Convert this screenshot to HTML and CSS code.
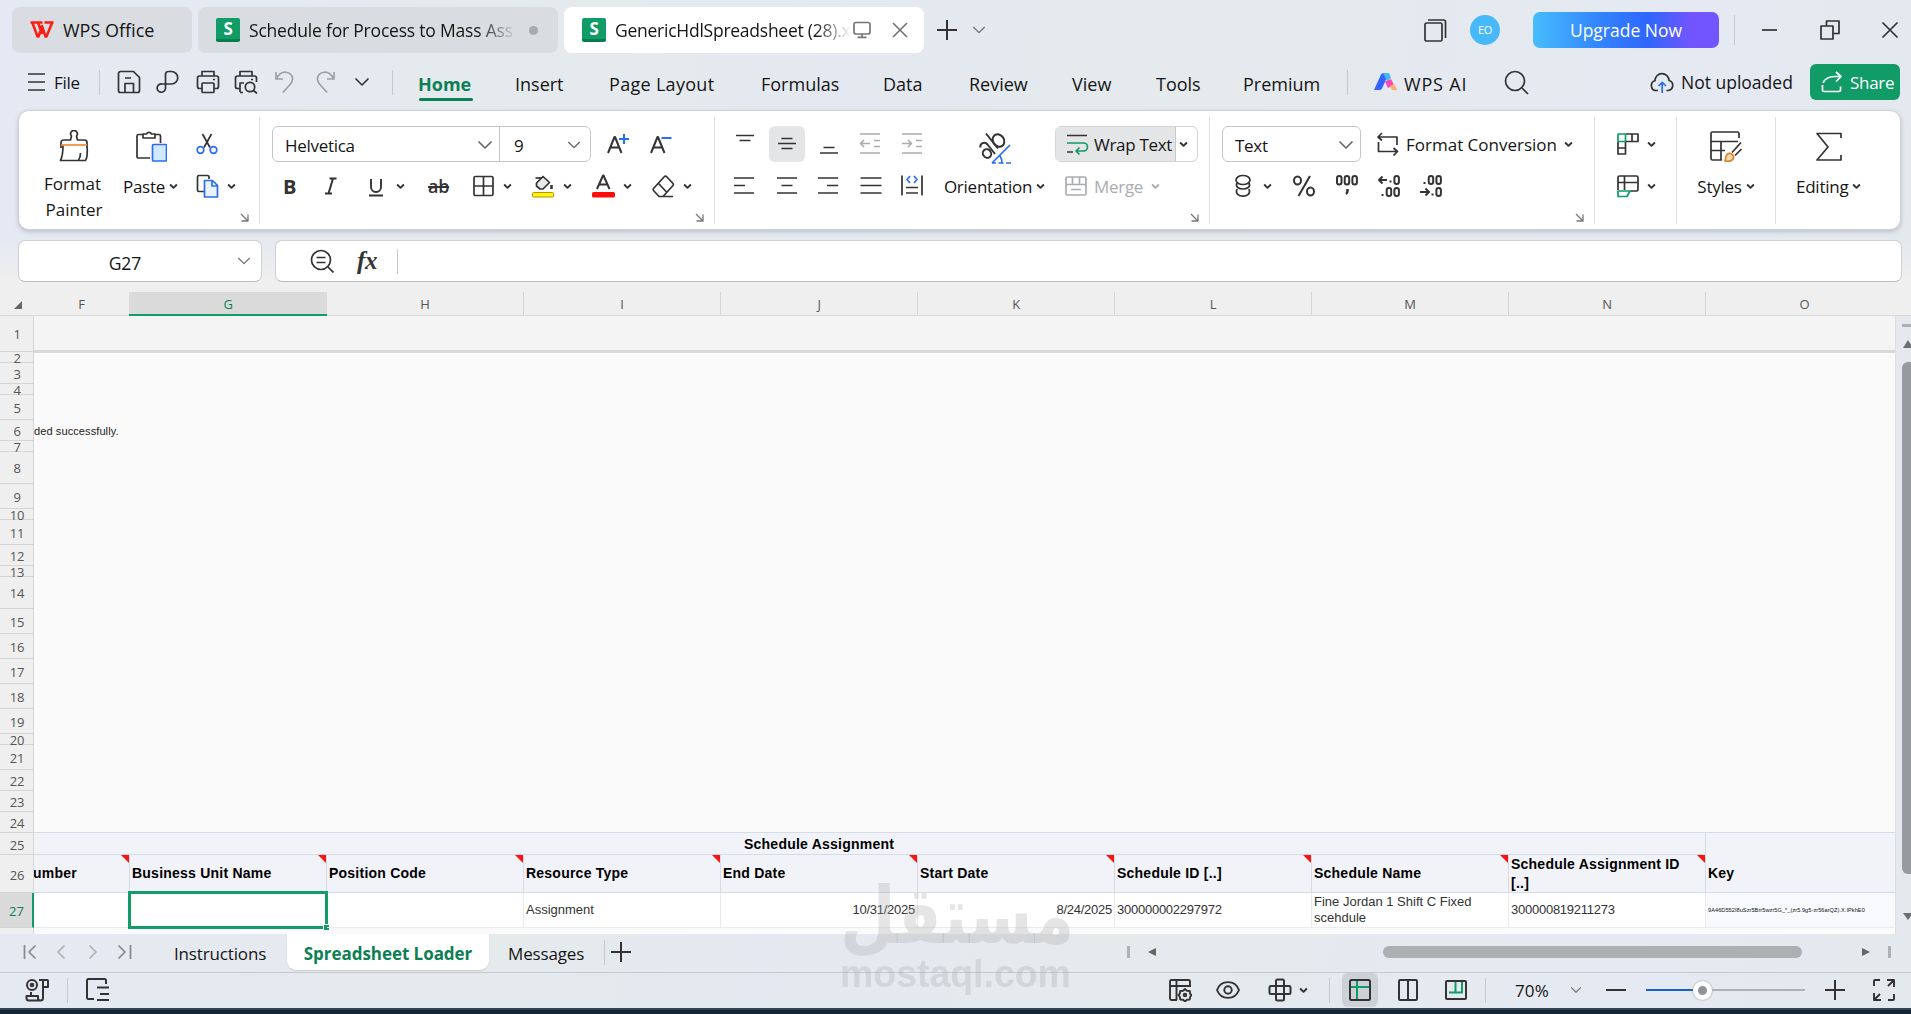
FILE: index.html
```html
<!DOCTYPE html>
<html lang="en">

<head>
    <meta charset="UTF-8">
    <meta name="viewport" content="width=device-width, initial-scale=1.0">
    <title>WPS Spreadsheet</title>
    <link rel="stylesheet" href="styles.css">
</head>

<body>

    <!-- shared icons -->
    <svg class="defs">
        <symbol id="caret" viewBox="0 0 8 8"><path d="M1 2.2l3 3 3-3" stroke-width="1.7"/></symbol>
        <symbol id="chevron" viewBox="0 0 16 16"><path d="M1.5 4.5l6.5 6.5 6.5-6.5" stroke-width="1.6"/></symbol>
        <symbol id="launcher" viewBox="0 0 9 9"><path d="M1 1l6.5 6.500M8 1.500V8H1.500" stroke-width="1.3"/></symbol>
    </svg>

    <header class="titlebar">
        <div class="doc-tab home">
            <svg width="24" height="18" viewBox="0 0 24 18"><path d="M0.500 1.500h12M14.500 1.500h9M2.500 2l5 13.500h1L12 5l3.500 10.500h1L22 2M8 1.500L12 13" stroke="#fb1d12" stroke-width="2.500"/></svg>
            <span>WPS Office</span>
        </div>
        <div class="doc-tab">
            <i class="sheet-icon">S</i>
            <span class="fade long">Schedule for Process to Mass Ass</span>
            <i class="dot"></i>
        </div>
        <div class="doc-tab current">
            <i class="sheet-icon">S</i>
            <span class="fade short">GenericHdlSpreadsheet (28).x</span>
            <svg class="soft" width="18" height="18" viewBox="0 0 18 18"><rect x="1" y="1.500" width="16" height="11.500" rx="2"/><path d="M9 13v3M4.500 16.300h9"/></svg>
            <svg class="soft close-tab" width="16" height="16" viewBox="0 0 16 16"><path d="M1 1l14 14M15 1L1 15"/></svg>
        </div>
        <div class="window-tools">
            <svg width="22" height="22" viewBox="0 0 22 22"><path d="M11 1v20M1 11h20" stroke-width="2"/></svg>
            <svg class="soft" width="14" height="14"><use href="#chevron" stroke-width="2"/></svg>
            <svg width="24" height="24" viewBox="0 0 24 24"><rect x="2" y="5" width="17" height="18" rx="1.500"/><path d="M5 2h15.500a2 2 0 0 1 2 2v16"/></svg>
            <div class="avatar">EO</div>
            <div class="upgrade">Upgrade Now</div>
            <i class="sep tall"></i>
            <svg width="17" height="20" viewBox="0 0 17 20"><path d="M1 10h15"/></svg>
            <svg width="20" height="20" viewBox="0 0 20 20"><rect x="1" y="6" width="12" height="13"/><path d="M6.500 6V1h12.500v12.500h-6"/></svg>
            <svg width="18" height="18" viewBox="0 0 18 18"><path d="M1.500 1.500l15 15M16.500 1.500l-15 15"/></svg>
        </div>
    </header>

    <nav class="menu">
        <svg width="17" height="18" viewBox="0 0 17 18"><path d="M0 1h17M0 9h17M0 17h17"/></svg>
        <span class="file">File</span>
        <i class="sep"></i>
        <svg class="ico" viewBox="0 0 24 24"><path d="M3.500 1.500h13l6 6V20.500a2 2 0 0 1-2 2h-17a2 2 0 0 1-2-2v-17a2 2 0 0 1 2-2zM8 22v-8.500h8.500V22M8 8h6"/></svg>
        <svg class="ico" viewBox="0 0 24 24"><path d="M9.500 18.500V4.500a3 3 0 0 1 3-3h3a6.200 6.200 0 0 1 0 12.500H6.500a4.200 4.200 0 1 0 3 4.500"/></svg>
        <svg class="ico" viewBox="0 0 24 24"><path d="M6 6V1.500h12V6M6 18.500H3.500a2 2 0 0 1-2-2V8a2 2 0 0 1 2-2h17a2 2 0 0 1 2 2v8.500a2 2 0 0 1-2 2H18M17 9.500h2"/><rect x="6" y="13" width="12" height="9.500" rx="1"/></svg>
        <svg class="ico" viewBox="0 0 24 24"><path d="M6 6V1.500h12V6M6 18.500H3.500a2 2 0 0 1-2-2V8a2 2 0 0 1 2-2h17a2 2 0 0 1 2 2v4M6 22V13h4M6 22.500h3M17 9.500h2M19.500 20.500l3.500 3"/><circle cx="16" cy="17" r="4.700"/></svg>
        <svg class="ico pale" viewBox="0 0 24 24"><path d="M3 2v7h7M3.500 8.500C6 4 10 1.500 14 2.500c6 1.500 7 7.500 3.500 11.500L10 22.500"/></svg>
        <svg class="ico pale" viewBox="0 0 24 24"><path d="M21 2v7h-7M20.500 8.500C18 4 14 1.500 10 2.500 4 4 3 10 6.500 14l7.500 8.500"/></svg>
        <svg width="16" height="16"><use href="#chevron"/></svg>
        <i class="sep"></i>
        <span class="menu-tab active">Home</span>
        <span class="menu-tab">Insert</span>
        <span class="menu-tab layout">Page Layout</span>
        <span class="menu-tab">Formulas</span>
        <span class="menu-tab">Data</span>
        <span class="menu-tab">Review</span>
        <span class="menu-tab">View</span>
        <span class="menu-tab">Tools</span>
        <span class="menu-tab">Premium</span>
        <i class="sep"></i>
        <svg width="24" height="18" viewBox="0 0 24 18">
            <g stroke="none"><path d="M0 17L7 1.500Q8 0 9.500 0H15L8 15.500Q7 17 5.500 17z" fill="#3563ff"/><path d="M9 0h6l2 5-4 3z" fill="#41b8f2"/><path d="M11 8.500L17 6l3 6-6 3z" fill="#f14bb8"/><path d="M16 13l4-2 3.500 6H18z" fill="#ffab78"/></g>
        </svg>
        <span class="menu-tab ai">WPS AI</span>
        <svg width="25" height="25" viewBox="0 0 25 25"><circle cx="11" cy="11" r="9.500"/><path d="M18 18l6 6"/></svg>
        <svg class="ico" viewBox="0 0 24 24"><path d="M8 20.500H6.500A5 5 0 0 1 5 10.700 7 7 0 0 1 19 10.500 5.100 5.100 0 0 1 18 20.500h-1.500"/><path d="M12.200 23V12.500M8.500 16l3.700-3.700L16 16" stroke="#2b6df2"/></svg>
        <span class="upload">Not uploaded</span>
        <div class="share">
            <svg width="22" height="22" viewBox="0 0 22 22"><path d="M1.500 14v5a1.500 1.500 0 0 0 1.500 1.500h15a1.500 1.500 0 0 0 1.500-1.500v-3.500M2 12C4 7.500 8 5.500 14 5.500h5.500M15 1l5 4.500-5 5"/></svg>
            <span>Share</span>
        </div>
    </nav>

    <section class="ribbon">
        <div class="group clipboard">
            <div class="big painter">
                <svg width="32" height="32" viewBox="0 0 32 32"><path d="M3 18v-5.500a2.500 2.500 0 0 1 2.500-2.500h7L13.500 6a3.300 3.300 0 1 1 5 0l1 4h7a2.500 2.500 0 0 1 2.500 2.500V18M5 15.500c0 6 0 10-2.500 15h25c2-3 2-9 1.500-15M20.500 30c1.500-2 2-4.500 2-7"/><path d="M3 15h26" stroke="#f08a3c"/></svg>
                <span>Format</span>
                <span>Painter</span>
            </div>
            <div class="big paste">
                <svg width="32" height="32" viewBox="0 0 32 32"><path d="M15 28H3.500A1.500 1.500 0 0 1 2 26.500V6A1.500 1.500 0 0 1 3.500 4.500H8M20 4.500h4A1.500 1.500 0 0 1 25.500 6v7"/><path d="M8 8V4h3.500a2.800 2.800 0 0 1 5 0H20v4z"/><rect x="17.500" y="14.500" width="14" height="16.500" rx="1" fill="#cfeaff" stroke="#2b6df2"/></svg>
                <span>Paste<svg class="caret"><use href="#caret"/></svg></span>
            </div>
            <div class="stack cuts">
                <div class="tools"><svg class="ico" viewBox="0 0 24 24"><path d="M7.500 2l7.500 13.500M16.500 2L9 15.500"/><g stroke="#2b6df2"><circle cx="5.500" cy="18" r="3.300"/><circle cx="18.500" cy="18" r="3.300"/></g></svg></div>
                <div class="tools"><svg class="ico" viewBox="0 0 24 24"><path d="M9 17.500H4A1.500 1.500 0 0 1 2.500 16V3A1.500 1.500 0 0 1 4 1.500h8.500A1.500 1.500 0 0 1 14 3v2"/><path d="M9.500 6.500h8l5 5V23h-13zM17 7v5h5" fill="#eaf4ff" stroke="#2b6df2"/></svg><svg class="caret"><use href="#caret"/></svg></div>
                <svg class="launcher"><use href="#launcher"/></svg>
            </div>
        </div>

        <div class="group fonts">
            <div class="stack">
                <div class="tools top">
                    <div class="combo">
                        <span class="name">Helvetica<svg width="16" height="16"><use href="#chevron"/></svg></span>
                        <span class="size">9<svg width="14" height="14"><use href="#chevron"/></svg></span>
                    </div>
                    <svg class="ico" viewBox="0 0 24 24"><path d="M2 21L8.500 5h.5l6.500 16M4.500 15.500H13" stroke-width="2"/><path d="M18 2v10M13 7h10" stroke="#2b6df2" stroke-width="2"/></svg>
                    <svg class="ico" viewBox="0 0 24 24"><path d="M2 21L8.500 5h.5l6.500 16M4.500 15.500H13" stroke-width="2"/><path d="M12.500 6h10" stroke="#2b6df2" stroke-width="2"/></svg>
                </div>
                <div class="tools bottom">
                    <b class="letter">B</b>
                    <svg class="ico" viewBox="0 0 24 24"><path d="M5.500 4.500h7M1 19.500h7M9 4.500l-4.500 15" stroke-width="2"/></svg>
                    <svg class="ico" viewBox="0 0 24 24"><path d="M4 5v8a5 5 0 0 0 10 0V5M2 21.500h14" stroke-width="1.900"/></svg>
                    <svg class="caret"><use href="#caret"/></svg>
                    <span class="strike">ab</span>
                    <svg class="ico" viewBox="0 0 24 24"><rect x="2" y="2.500" width="19" height="19" rx="1.500"/><path d="M11.500 3v18M2 12h19"/></svg>
                    <svg class="caret"><use href="#caret"/></svg>
                    <svg class="ico" viewBox="0 0 24 24"><path d="M5.500 9L12 2.500l6.500 6L12 15H9L5.500 12z" fill="#e8e9ea"/><path d="M4.500 4H11"/><path d="M20.500 11v4" stroke-width="2.500"/><rect x="1.500" y="18.500" width="21" height="4.500" rx="1" fill="#fff800" stroke="#b99014" stroke-width="1"/></svg>
                    <svg class="caret"><use href="#caret"/></svg>
                    <svg class="ico" viewBox="0 0 24 24"><path d="M6 15l6-13.500h.5L18.500 15M8 10.500h9" stroke-width="2"/><rect x="1" y="18" width="23" height="5.500" rx="1.500" fill="#fb0d0d" stroke="none"/></svg>
                    <svg class="caret"><use href="#caret"/></svg>
                    <svg class="ico wide" viewBox="0 0 26 24"><path d="M8 22.500l-5.500-6a1.500 1.500 0 0 1 0-2L13.500 2.500a1.500 1.500 0 0 1 2 0L22 9.500a1.500 1.500 0 0 1 0 2L12 22.500zM7.500 9.500l8 8.500M8 22.500h14"/></svg>
                    <svg class="caret"><use href="#caret"/></svg>
                </div>
                <svg class="launcher"><use href="#launcher"/></svg>
            </div>
        </div>

        <div class="group align">
            <div class="stack">
                <div class="tools top">
                    <svg class="ico" viewBox="0 0 24 24"><path d="M3 3.500h18M6.500 8.500h11"/></svg>
                    <span class="pressed"><svg class="ico" viewBox="0 0 24 24"><path d="M6.500 6.500h11M3 11.500h18M6.500 16.500h11"/></svg></span>
                    <svg class="ico" viewBox="0 0 24 24"><path d="M6.500 15.500h11M3 21h18"/></svg>
                    <svg class="ico pale" viewBox="0 0 24 24"><path d="M2 2h20M2 21h20M16 8.500h6M16 14.500h6M2.500 11.500H12M6 8l-3.500 3.500L6 15"/></svg>
                    <svg class="ico pale" viewBox="0 0 24 24"><path d="M2 2h20M2 21h20M16 8.500h6M16 14.500h6M2 11.500h9.500M8 8l3.500 3.500L8 15"/></svg>
                </div>
                <div class="tools bottom">
                    <svg class="ico" viewBox="0 0 24 24"><path d="M2 4h20M2 11.500h11M2 19h20"/></svg>
                    <svg class="ico" viewBox="0 0 24 24"><path d="M2 4h20M6.500 11.500h11M2 19h20"/></svg>
                    <svg class="ico" viewBox="0 0 24 24"><path d="M2 4h20M11 11.500h11M2 19h20"/></svg>
                    <svg class="ico" viewBox="0 0 24 24"><path d="M1.500 4h21M1.500 11.500h21M1.500 19h21"/></svg>
                    <svg class="ico" viewBox="0 0 24 24"><path d="M2 1.500v20M22 1.500v20M6 13.500h12M6 19h12"/><path d="M10 2L7 5.500 10 9M14 2l3 3.500L14 9" stroke="#2b6df2"/></svg>
                </div>
            </div>
            <div class="big orient">
                <svg width="36" height="34" viewBox="0 0 36 34"><g stroke-width="2"><path d="M3.500 17.500c-1-4 4-6.500 7-3l7.500 9.500"/><ellipse cx="10" cy="23.500" rx="4" ry="4.500" transform="rotate(-35 10 23.500)"/><path d="M9 3.500l12 15"/><ellipse cx="21.500" cy="10.500" rx="5.500" ry="6.500" transform="rotate(-35 21.500 10.500)"/></g><path d="M33 15L15 33M15 33h4M21.500 33h5M29 33h5M23 26q2 3 2 7" stroke="#2b6df2"/></svg>
                <span>Orientation<svg class="caret"><use href="#caret"/></svg></span>
            </div>
            <div class="stack">
                <div class="tools">
                    <div class="wrap">
                        <span class="on"><svg class="ico" viewBox="0 0 24 24"><path d="M2 3.500h20M2 20h6"/><path d="M2 11h16.500a3.500 3.500 0 0 1 0 8H12M14.500 15.500L11 19l3.500 3.500" stroke="#109b67"/></svg>Wrap Text</span>
                        <svg class="caret"><use href="#caret"/></svg>
                    </div>
                </div>
                <div class="tools merge">
                    <svg class="ico" viewBox="0 0 24 24"><rect x="2" y="3" width="20" height="18" rx="1.500"/><path d="M2 10.500h20M8.500 3v7M15.500 3v7M7 15.500h10"/></svg>
                    <span>Merge</span>
                    <svg class="caret"><use href="#caret"/></svg>
                </div>
                <svg class="launcher"><use href="#launcher"/></svg>
            </div>
        </div>

        <div class="group number">
            <div class="stack">
                <div class="tools top">
                    <div class="combo format"><span>Text<svg width="16" height="16"><use href="#chevron"/></svg></span></div>
                    <svg class="ico" viewBox="0 0 24 24"><path d="M6 1L2 5l4 3.500M2.500 5H21v8M2.500 10v9.500H21M17.500 16l4 3.500-4 4"/></svg>
                    <span class="convert">Format Conversion</span>
                    <svg class="caret"><use href="#caret"/></svg>
                </div>
                <div class="tools bottom">
                    <svg class="ico" viewBox="0 0 24 24"><ellipse cx="12" cy="6" rx="7" ry="4.500"/><path d="M6 9c-4 8 16 8 12 0M6 15c-4 9.500 16 9.500 12 0"/></svg>
                    <svg class="caret"><use href="#caret"/></svg>
                    <svg class="ico" viewBox="0 0 24 24"><g stroke-width="2"><ellipse cx="5.500" cy="6.500" rx="3.500" ry="4"/><ellipse cx="18.500" cy="17.500" rx="3.500" ry="4"/><path d="M18 2L6.500 22"/></g></svg>
                    <svg class="ico" viewBox="0 0 24 24"><g stroke-width="2"><rect x="2" y="2" width="4.500" height="8.500" rx="2.200"/><rect x="9.700" y="2" width="4.500" height="8.500" rx="2.200"/><rect x="17.400" y="2" width="4.500" height="8.500" rx="2.200"/></g><path d="M12.500 15v2q0 2-1.500 3" stroke-width="2.500"/></svg>
                    <svg class="ico" viewBox="0 0 24 24"><g stroke-width="2"><path d="M10 6H2M5.500 2.500L2 6l3.500 3.500M12.500 7.500h2"/><rect x="17.400" y="2" width="4.500" height="8" rx="2.200"/><rect x="9.700" y="14" width="4.500" height="8" rx="2.200"/><rect x="17.400" y="14" width="4.500" height="8" rx="2.200"/><path d="M4.500 21h2"/></g></svg>
                    <svg class="ico" viewBox="0 0 24 24"><g stroke-width="2"><rect x="17.400" y="2" width="4.500" height="8" rx="2.200"/><rect x="9.700" y="2" width="4.500" height="8" rx="2.200"/><path d="M4.500 9h2M1 18h9M6.500 14.500L10 18l-3.500 3.500M12.500 20.500h2"/><rect x="17.400" y="14" width="4.500" height="8" rx="2.200"/></g></svg>
                </div>
                <svg class="launcher"><use href="#launcher"/></svg>
            </div>
        </div>

        <div class="group cells">
            <div class="stack">
                <div class="tools"><svg class="ico" viewBox="0 0 24 24"><path d="M10 2h12v7.500H10M16 2v7.500M2 10v12h7.500V10M2 16h7.500"/><rect x="2" y="2" width="7.500" height="7.500" stroke="#109b67"/></svg><svg class="caret"><use href="#caret"/></svg></div>
                <div class="tools"><svg class="ico" viewBox="0 0 24 24"><path d="M2 16V3.500A1.500 1.500 0 0 1 3.500 2h17A1.500 1.500 0 0 1 22 3.500v12a1.500 1.500 0 0 1-1.500 1.500H14M2 8.500h20M8.500 2v14"/><path d="M2 17h12l-3 5.500H2z" stroke="#109b67"/></svg><svg class="caret"><use href="#caret"/></svg></div>
            </div>
        </div>

        <div class="group styles">
            <div class="big">
                <svg width="34" height="32" viewBox="0 0 34 32"><path d="M30 8V3.500A1.500 1.500 0 0 0 28.500 2h-25A1.500 1.500 0 0 0 2 3.500v25A1.500 1.500 0 0 0 3.500 30H13M2 11.500h27M12 12v18M2 20.500h14M32 12.500L23 22.500M32.500 19L26 25.500"/><path d="M16 31c1-2 0-4 2-6.500 2-2 6-1 6.500 2 .5 4-4 5.500-8.500 4.500z" fill="#ffd9b0" stroke="#d9822b"/></svg>
                <span>Styles<svg class="caret"><use href="#caret"/></svg></span>
            </div>
        </div>

        <div class="group editing">
            <div class="big">
                <svg width="30" height="32" viewBox="0 0 30 32"><path d="M27 8V3.500H3L14 17 3 30h24v-5"/></svg>
                <span>Editing<svg class="caret"><use href="#caret"/></svg></span>
            </div>
        </div>
    </section>

    <section class="formula-row">
        <div class="name-box"><span>G27</span><svg width="14" height="14"><use href="#chevron"/></svg></div>
        <div class="formula-bar">
            <svg width="24" height="24" viewBox="0 0 24 24"><circle cx="11" cy="11" r="9.500"/><path d="M18 18l5.500 5.500M6.500 8.500h9M6.500 13.500h9"/></svg>
            <span class="fx">fx</span>
            <i class="sep"></i>
        </div>
    </section>

    <main class="sheet">
        <div class="grid">
            <div class="letters">
                <span class="corner"><svg width="8" height="8" viewBox="0 0 8 8"><path d="M8 0v8H0z" fill="#666" stroke="none"/></svg></span>
                <span class="f">F</span><span class="sel">G</span><span>H</span><span>I</span><span>J</span><span>K</span><span>L</span><span>M</span><span>N</span><span class="o">O</span>
            </div>
            <div class="row h36"><b>1</b><div class="frozen"></div></div>
            <div class="row h11"><b>2</b></div>
            <div class="row h21"><b>3</b></div>
            <div class="row h11"><b>4</b></div>
            <div class="row h25"><b>5</b></div>
            <div class="row h21"><b>6</b><span class="note">ded successfully.</span></div>
            <div class="row h11"><b>7</b></div>
            <div class="row h32"><b>8</b></div>
            <div class="row h25"><b>9</b></div>
            <div class="row h11"><b>10</b></div>
            <div class="row h25"><b>11</b></div>
            <div class="row h21"><b>12</b></div>
            <div class="row h11"><b>13</b></div>
            <div class="row h32"><b>14</b></div>
            <div class="row h25"><b>15</b></div>
            <div class="row h25"><b>16</b></div>
            <div class="row h25"><b>17</b></div>
            <div class="row h25"><b>18</b></div>
            <div class="row h25"><b>19</b></div>
            <div class="row h11"><b>20</b></div>
            <div class="row h25"><b>21</b></div>
            <div class="row h21"><b>22</b></div>
            <div class="row h21"><b>23</b></div>
            <div class="row h21"><b>24</b></div>
            <div class="row h22 band"><b>25</b><span class="merged">Schedule Assignment</span><span class="key-top"></span></div>
            <div class="row h38 band heads">
                <b>26</b>
                <span class="cell f tip">umber</span>
                <span class="cell tip">Business Unit Name</span>
                <span class="cell tip">Position Code</span>
                <span class="cell tip">Resource Type</span>
                <span class="cell tip">End Date</span>
                <span class="cell tip">Start Date</span>
                <span class="cell tip">Schedule ID [..]</span>
                <span class="cell tip">Schedule Name</span>
                <span class="cell tip">Schedule Assignment ID<br>[..]</span>
                <span class="cell o">Key</span>
            </div>
            <div class="row h35 data">
                <b class="current">27</b>
                <span class="cell f"></span>
                <span class="cell picked"></span>
                <span class="cell"></span>
                <span class="cell">Assignment</span>
                <span class="cell num right">10/31/2025</span>
                <span class="cell num right">8/24/2025</span>
                <span class="cell num">300000002297972</span>
                <span class="cell">Fine Jordan 1 Shift C Fixed scehdule</span>
                <span class="cell num">300000819211273</span>
                <span class="cell o key">9A46D552I8uSzr5Brr5wzr5G_*_(zr5.9g5-zr56arQZ).X.IPkhE0</span>
            </div>
            <div class="row h6"><b></b></div>
        </div>
        <div class="vscroll">
            <i class="split"></i>
            <svg width="10" height="8" viewBox="0 0 10 8"><path d="M5 0l5 8H0z"/></svg>
            <i class="thumb"></i>
            <svg width="10" height="7" viewBox="0 0 10 7"><path d="M5 7L0 0h10z"/></svg>
        </div>
    </main>

    <footer class="sheet-tabs">
        <svg class="dim" width="16" height="16" viewBox="0 0 16 16"><path d="M2.500 1v14M13.500 1.500L7 8l6.500 6.500"/></svg>
        <svg class="dim lighter" width="16" height="16" viewBox="0 0 16 16"><path d="M9.500 1.500L3 8l6.500 6.500"/></svg>
        <svg class="dim lighter" width="16" height="16" viewBox="0 0 16 16"><path d="M2.500 1.500L9 8l-6.500 6.500"/></svg>
        <svg class="dim" width="16" height="16" viewBox="0 0 16 16"><path d="M1.500 1.500L8 8l-6.500 6.500M13.500 1v14"/></svg>
        <span class="tab">Instructions</span>
        <span class="tab open">Spreadsheet Loader</span>
        <span class="tab">Messages</span>
        <i class="sep"></i>
        <svg width="20" height="20" viewBox="0 0 20 20"><path d="M10 0v20M0 10h20" stroke-width="2"/></svg>
        <i class="mark"></i>
        <svg class="arrow" width="8" height="8" viewBox="0 0 8 8"><path d="M0 4l8-4v8z"/></svg>
        <i class="thumb"></i>
        <svg class="arrow" width="8" height="8" viewBox="0 0 8 8"><path d="M8 4L0 0v8z"/></svg>
        <i class="mark"></i>
    </footer>

    <footer class="status">
        <svg class="ico" viewBox="0 0 24 24"><g stroke-width="2"><circle cx="7" cy="7" r="5"/><circle cx="7" cy="7" r="1.300"/><path d="M14 2h8a1 1 0 0 1 1 1v6h-5V2M18 9v11a2.500 2.500 0 0 1-2.500 2.500H4A2.500 2.500 0 0 1 1.500 20v-2H13v2a2.500 2.500 0 0 0 2.500 2.500M6 14v4"/></g></svg>
        <i class="sep"></i>
        <svg class="ico" viewBox="0 0 24 24"><g stroke-width="2"><path d="M20 6V2.500A1.500 1.500 0 0 0 18.500 1h-16A1.500 1.500 0 0 0 1 2.500v17A1.500 1.500 0 0 0 2.500 21H8M11 9.500h12M14 16h9M11 22h12"/></g></svg>
        <svg class="ico" viewBox="0 0 24 24"><g stroke-width="1.900"><path d="M22 9V3.500A1.500 1.500 0 0 0 20.500 2h-17A1.500 1.500 0 0 0 2 3.500v17A1.500 1.500 0 0 0 3.500 22H9M2 8h20M8.500 2v20"/><circle cx="17" cy="17" r="1.300"/><path d="M17 11l2 1.700 2.800.3.300 2.700L23.500 17l-1.400 2-.3 2.500-2.800.3L17 23.500l-2-1.700-2.800-.3-.3-2.500L10.500 17l1.400-1.500.3-2.500 2.800-.3z"/></g></svg>
        <svg class="ico" viewBox="0 0 24 24"><g stroke-width="1.900"><path d="M1 12C5 1.500 19 1.500 23 12 19 22.500 5 22.500 1 12z"/><circle cx="12" cy="12" r="3.700"/></g></svg>
        <svg class="ico" viewBox="0 0 24 24"><g stroke-width="2"><rect x="8" y="1.500" width="8" height="21" rx="1.500"/><rect x="1.500" y="8" width="21" height="8" rx="1.500"/></g></svg>
        <svg class="caret"><use href="#caret"/></svg>
        <i class="sep"></i>
        <span class="view-on"><svg class="ico" viewBox="0 0 24 24"><path d="M9 2v20M2 9h20" stroke="#109b67" stroke-width="2"/><rect x="2" y="2" width="20" height="20" rx="1.500" stroke-width="2"/></svg></span>
        <svg class="ico" viewBox="0 0 24 24"><g stroke-width="2"><rect x="3" y="2" width="18" height="20" rx="1"/><path d="M12 2v20"/></g></svg>
        <svg class="ico" viewBox="0 0 24 24"><path d="M5 14.500h13V4M11.500 4v10" stroke="#109b67" stroke-width="2"/><rect x="2" y="3" width="20" height="18" rx="1" stroke-width="2"/></svg>
        <i class="sep"></i>
        <span class="zoom">70%</span>
        <svg class="soft" width="12" height="12"><use href="#chevron" stroke-width="2"/></svg>
        <svg width="20" height="20" viewBox="0 0 20 20"><path d="M0 10h20" stroke-width="2"/></svg>
        <div class="slider"><i class="fill"></i><i class="knob"></i><i class="rest"></i></div>
        <svg width="20" height="20" viewBox="0 0 20 20"><path d="M10 0v20M0 10h20" stroke-width="2"/></svg>
        <svg class="ico" viewBox="0 0 24 24"><g stroke-width="1.900"><path d="M2 8V3a1 1 0 0 1 1-1h5M15 2h7v7M22 2l-6 6M22 16v5a1 1 0 0 1-1 1h-5M9 22H2v-7M2 22l6-6"/></g></svg>
    </footer>

    <div class="taskbar"></div>

    <div class="watermark">
        <span class="ar">مستقل</span>
        <span class="en">mostaql.com</span>
    </div>

</body>

</html>
```
FILE: styles.css
```css
* {
    box-sizing: border-box;
}

body {
    margin: 0;
    width: 1911px;
    height: 1014px;
    overflow: hidden;
    position: relative;
    font-family: "Open Sans", "Noto Sans", sans-serif;
    font-size: 17px;
    letter-spacing: -0.3px;
    color: #151515;
    white-space: nowrap;
    background: linear-gradient(95deg, #e5e9f3, #e5eaed 30%, #e4e9f1 42%, #e5eaed 60%, #e5e9f2 85%, #e4e9ed);
}

svg {
    display: block;
    flex: none;
    fill: none;
    stroke: #333;
    stroke-width: 1.7;
    stroke-linejoin: round;
}

.defs {
    position: absolute;
    width: 0;
    height: 0;
}

.ico {
    width: 24px;
    height: 24px;
}

.ico.wide {
    width: 26px;
}

.caret {
    width: 9px;
    height: 9px;
}

.soft {
    stroke: #777;
}

.pale {
    stroke: #a9adb1;
}

.sep {
    width: 1px;
    height: 25px;
    background: #c6cacf;
}

/* title bar */
.titlebar {
    display: flex;
    gap: 6px;
    height: 60px;
    padding: 7px 0 7px 12px;
}

.doc-tab {
    display: flex;
    flex: none;
    align-items: center;
    width: 360px;
    height: 46px;
    padding-left: 18px;
    border-radius: 8px;
    background: #d9dde1;
    font-size: 17.5px;
    letter-spacing: -0.2px;
}

.doc-tab.home {
    width: 180px;
    font-size: 18px;
    letter-spacing: 0;
}

.doc-tab.home span {
    margin-left: 9px;
}

.doc-tab.current {
    background: #fff;
}

.sheet-icon {
    width: 24px;
    height: 24px;
    border-radius: 2px;
    border-bottom: 3px solid #077c4f;
    background: #109b67;
    color: #fff;
    font: bold 17px/22px "Open Sans", sans-serif;
    text-align: center;
}

.fade {
    overflow: hidden;
    margin-left: 9px;
    -webkit-mask-image: linear-gradient(90deg, #000 85%, transparent);
    mask-image: linear-gradient(90deg, #000 85%, transparent);
}

.fade.long {
    width: 268px;
}

.fade.short {
    width: 236px;
    margin-right: 2px;
    letter-spacing: -0.25px;
}

.dot {
    width: 9px;
    height: 9px;
    margin-left: 12px;
    border-radius: 50%;
    background: #a7abae;
}

.close-tab {
    margin-left: 21px;
}

.window-tools {
    display: grid;
    flex: none;
    grid-template-columns: 36px 451px 47px 63px 201px 27px 59px 61px 24px;
    align-items: center;
    height: 46px;
    margin-left: 6px;
}

.avatar {
    width: 30px;
    height: 30px;
    border-radius: 50%;
    background: #47b8fa;
    color: #fff;
    font-size: 11px;
    line-height: 29px;
    text-align: center;
}

.upgrade {
    width: 186px;
    height: 36px;
    border-radius: 7px;
    background: linear-gradient(90deg, #46bdfb, #3385ff 35%, #2e66ff 62%, #7355ff 85%);
    color: #fff;
    font-size: 17.5px;
    letter-spacing: 0;
    line-height: 36px;
    text-align: center;
}

.sep.tall {
    height: 30px;
}

/* menu */
.menu {
    display: grid;
    grid-template-columns: 26px 45px 18px 39px 40px 38px 39px 40px 41px 38px 26px 97px 94px 152px 122px 86px 103px 84px 87px 104px 27px 30px 100px 146px 31px 127px 92px;
    align-items: center;
    height: 44px;
    padding-left: 28px;
}

.menu .pale {
    stroke: #9da1a5;
}

.menu-tab {
    position: relative;
    padding-top: 3px;
    font-size: 18px;
    letter-spacing: 0;
}

.menu-tab.layout {
    letter-spacing: 0.3px;
}

.menu-tab.ai {
    letter-spacing: 0.8px;
}

.upload {
    font-size: 17.5px;
    letter-spacing: 0;
}

.menu-tab.active {
    width: 55px;
    font-weight: bold;
    letter-spacing: 0;
    color: #0c7f54;
}

.menu-tab.active::after {
    content: "";
    position: absolute;
    left: 1px;
    right: 0;
    bottom: -5px;
    height: 3px;
    border-radius: 2px;
    background: #0c7f54;
}

.share {
    display: flex;
    align-items: center;
    gap: 7px;
    height: 36px;
    padding-left: 11px;
    margin-left: 2px;
    border-radius: 6px;
    background: #109b67;
    color: #fff;
}

.share svg {
    stroke: #fff;
}

/* ribbon */
.ribbon {
    display: flex;
    width: 1883px;
    height: 120px;
    margin: 6px 0 0 18px;
    padding: 6px 0 5px 1px;
    border: 1px solid #cdd2d6;
    border-radius: 11px;
    background: #fff;
    box-shadow: 0 2px 4px rgba(90, 100, 110, 0.3);
}

.group {
    display: flex;
    padding-top: 9px;
    border-right: 1px solid #dcdee0;
}

.group.editing {
    border: none;
    padding-left: 20px;
}

.stack {
    display: flex;
    flex-direction: column;
    gap: 6px;
    flex: 1;
}

.tools {
    display: flex;
    align-items: center;
    height: 36px;
}

.tools.top,
.tools.bottom {
    display: grid;
}

.launcher {
    width: 9px;
    height: 9px;
    margin: 3px 10px 0 0;
    align-self: flex-end;
    stroke: #777;
}

.big {
    display: flex;
    flex-direction: column;
    align-items: center;
}

.big > svg {
    margin: 4px 0 6px;
}

.big span {
    display: flex;
    align-items: center;
    gap: 4px;
    height: 36px;
    letter-spacing: -0.25px;
}

.clipboard {
    width: 240px;
    padding-left: 24px;
}

.painter {
    width: 60px;
}

.painter span {
    height: 25px;
    padding-top: 8px;
    letter-spacing: 0;
}

.painter svg + span {
    margin-left: -3px;
    padding-top: 6px;
}

.paste {
    width: 53px;
    margin: 0 17px 0 20px;
}

.cuts .tools {
    padding-left: 1px;
    gap: 8px;
}

.fonts {
    width: 455px;
}

.fonts .top {
    grid-template-columns: 334px 43px 24px;
    padding-left: 12px;
}

.fonts .bottom {
    grid-template-columns: 41px 43px 29px 31px 45px 31px 28px 32px 28px 32px 28px 32px 10px;
    padding-left: 23px;
}

.combo {
    display: flex;
    width: 319px;
    height: 36px;
    border: 1px solid #c3c5c8;
    border-radius: 6px;
}

.combo span {
    display: flex;
    flex: 1;
    align-items: center;
    justify-content: space-between;
    padding: 2px 6px 0 12px;
}

.combo svg {
    stroke: #666;
}

.combo .size {
    flex: none;
    width: 91px;
    padding-right: 9px;
    padding-left: 14px;
    border-left: 1px solid #c3c5c8;
}

.combo.format {
    width: 139px;
}

.letter {
    font-size: 20px;
    color: #333;
}

.strike {
    margin-left: 1px;
    font-size: 18px;
    font-weight: 600;
    color: #333;
    text-decoration: line-through 1.5px;
    text-decoration-skip-ink: none;
}

.align {
    width: 495px;
}

.align .stack:first-child {
    flex: none;
    width: 214px;
}

.align .top {
    grid-template-columns: 36px 48px 41px 42px 24px;
    padding-left: 18px;
}

.align .bottom {
    grid-template-columns: 43px 41px 43px 41px 24px;
    padding-left: 17px;
}

.pressed {
    display: flex;
    align-items: center;
    justify-content: center;
    width: 36px;
    height: 36px;
    border-radius: 6px;
    background: #e4e5e6;
}

.orient {
    width: 103px;
    margin: 0 9px 0 14px;
}

.orient > svg {
    margin-bottom: 4px;
}

.wrap {
    display: flex;
    align-items: center;
    width: 143px;
    height: 36px;
    border: 1px solid #d3d5d7;
    border-radius: 6px;
    overflow: hidden;
}

.wrap .on {
    display: flex;
    align-items: center;
    gap: 5px;
    width: 120px;
    height: 36px;
    padding-left: 9px;
    margin-right: 3px;
    border-right: 1px solid #c7c9cb;
    background: #e4e5e6;
}

.merge {
    gap: 6px;
    padding-left: 9px;
    color: #a9adb1;
}

.merge .caret {
    margin-left: 2px;
}

.merge svg {
    stroke: #a9adb1;
}

.number {
    width: 385px;
}

.number .top {
    grid-template-columns: 154px 30px 158px 10px;
    padding-left: 12px;
}

.convert {
    letter-spacing: 0;
}

.number .bottom {
    grid-template-columns: 32px 29px 43px 42px 42px 24px;
    padding-left: 21px;
}

.cells {
    width: 82px;
    padding-left: 21px;
}

.cells .tools {
    gap: 7px;
}

.styles {
    width: 99px;
    justify-content: center;
}

/* formula row */
.formula-row {
    display: flex;
    gap: 13px;
    height: 62px;
    padding: 10px 0 10px 18px;
    background: linear-gradient(rgba(239, 239, 239, 0) 10px, #efefef 52px);
}

.name-box,
.formula-bar {
    display: flex;
    align-items: center;
    width: 244px;
    height: 42px;
    border: 1px solid #cdd1d5;
    border-bottom-color: #b9bcbe;
    border-radius: 7px;
    background: #fff;
}

.name-box span {
    width: 218px;
    padding: 3px 6px 0 0;
    text-align: center;
    font-size: 17.5px;
    letter-spacing: 0;
}

.name-box svg {
    stroke: #777;
}

.formula-bar {
    display: grid;
    grid-template-columns: 47px 40px 1px;
    width: 1627px;
    padding-left: 34px;
}

.fx {
    font: italic bold 25px "Liberation Serif", serif;
    color: #333;
}

/* sheet */
.sheet {
    display: flex;
    height: 642px;
}

.grid {
    width: 1895px;
    background: #fafafa;
}

.letters {
    display: flex;
    width: 1911px;
    height: 24px;
    background: #efefef;
    color: #555;
    font-size: 13px;
    line-height: 25px;
    text-align: center;
    border-bottom: 1px solid #d9d9d9;
}

.letters span {
    width: 197px;
    border-right: 1px solid #d5d5d5;
}

.letters .corner {
    width: 34px;
    padding: 9px 0 0 14px;
    border: none;
}

.letters .f {
    width: 95px;
    border: none;
}

.letters .sel {
    width: 198px;
    height: 24px;
    background: #dadada;
    color: #0c7f54;
    border: none;
    border-bottom: 2px solid #149c68;
}

.letters .o {
    border: none;
}

.row {
    display: flex;
    line-height: 1;
}

.row b {
    display: flex;
    align-items: center;
    justify-content: center;
    width: 34px;
    height: 100%;
    padding: 2px 0 0 1px;
    border-right: 1px solid #d5d5d5;
    border-bottom: 1px solid #d5d5d5;
    background: #efefef;
    color: #555;
    font-size: 13px;
    font-weight: normal;
}

.h6 { height: 6px; }
.h6 b { border-bottom: none; }
.h11 { height: 11px; }
.h21 { height: 21px; }
.h22 { height: 22px; }
.h25 { height: 25px; }
.h32 { height: 32px; }
.h35 { height: 35px; }
.h36 { height: 36px; }
.h38 { height: 38px; }

.row.h11 b,
.row.h21 b,
.row.h25 b {
    padding-top: 3px;
}

.frozen {
    width: 1861px;
    height: 37px;
    background: #f4f4f4;
    border-bottom: 3px solid #d9d9d9;
}

.note {
    overflow: hidden;
    padding-top: 5px;
    font: 11px/13px "Liberation Sans", sans-serif;
    letter-spacing: 0.1px;
    color: #222;
}

.band {
    background: #f2f3f8;
    font: bold 14px "Liberation Sans", sans-serif;
    letter-spacing: 0.23px;
    color: #000;
}

.band b {
    font-family: "Open Sans", sans-serif;
    letter-spacing: -0.3px;
}

.merged {
    display: flex;
    align-items: center;
    width: 1672px;
    padding: 1px 0 0 710px;
    border: solid #d3dce8;
    border-width: 0 1px 1px 0;
    box-shadow: 0 -1px #d3dce8;
}

.key-top {
    flex: 1;
    box-shadow: 0 -1px #d3dce8;
}

.cell {
    display: flex;
    align-items: center;
    width: 197px;
    padding: 0 2px;
    border: solid #d3dce8;
    border-width: 0 1px 1px 0;
    position: relative;
    line-height: 19px;
    white-space: normal;
}

.cell.f {
    width: 96px;
    overflow: hidden;
    padding-left: 0;
    text-indent: -1px;
}

.cell.o {
    width: 189px;
    border-right: none;
}

.tip::after {
    content: "";
    position: absolute;
    top: 0;
    right: 0;
    border: 4px solid #fb130d;
    border-left-color: transparent;
    border-bottom-color: transparent;
}

.data {
    background: #fff;
    font: 13px "Liberation Sans", sans-serif;
    letter-spacing: 0;
    color: #333;
}

.data .cell {
    line-height: 16px;
    border-color: #ebebeb;
}

.data .num {
    letter-spacing: -0.25px;
}

.data .right {
    justify-content: flex-end;
}

.data b.current {
    background: #dadada;
    color: #0c7f54;
    font-family: "Open Sans", sans-serif;
    border-right: 2px solid #149c68;
}

.picked::before {
    content: "";
    position: absolute;
    left: -2px;
    top: -2px;
    width: 194px;
    height: 32px;
    border: 3px solid #149c68;
}

.picked::after {
    content: "";
    position: absolute;
    right: -3px;
    bottom: -3px;
    width: 5px;
    height: 5px;
    border: solid #fff;
    border-width: 1px 0 0 1px;
    background: #149c68;
}

.data .key {
    background: #f7f9fd;
    font-size: 5.6px;
    letter-spacing: 0.06px;
    color: #111;
    white-space: nowrap;
}

.vscroll {
    width: 16px;
    margin-top: 24px;
    padding: 8px 0 0 6px;
    border-left: 1px solid #dde0e3;
    background: #e5e9ee;
    overflow: hidden;
}

.vscroll svg {
    margin: 13px 0 0 1px;
    fill: #6c6f72;
    stroke: none;
}

.vscroll .split {
    display: block;
    width: 12px;
    height: 3px;
    background: #aab0b4;
}

.vscroll .thumb {
    display: block;
    width: 14px;
    height: 512px;
    margin-top: 14px;
    border-radius: 6px;
    background: #979b9f;
}

.vscroll .thumb + svg {
    margin-top: 39px;
}

/* sheet tabs */
.sheet-tabs {
    display: grid;
    grid-template-columns: 33px 32px 30px 56px 113px 221px 96px 7px 516px 21px 235px 479px 26px 3px;
    align-items: center;
    height: 39px;
    padding: 0 0 2px 23px;
    border-bottom: 1px solid #c5cacd;
}

.sheet-tabs .dim {
    margin-left: -1px;
}

.dim {
    stroke: #858a8d;
}

.dim.lighter {
    stroke: #aeb3b6;
}

.tab {
    font-size: 17px;
    padding-top: 2px;
    letter-spacing: -0.15px;
}

.tab.open {
    width: 202px;
    height: 36px;
    align-self: start;
    border-radius: 0 0 9px 9px;
    background: #fff;
    color: #0c7f54;
    font-weight: bold;
    line-height: 36px;
    text-align: center;
    letter-spacing: -0.05px;
    box-shadow: 0 1px 1px #c9cdd0;
}

.mark {
    width: 3px;
    height: 12px;
    background: #acb1b4;
}

.arrow {
    fill: #666;
    stroke: none;
}

.sheet-tabs .thumb {
    width: 419px;
    height: 12px;
    border-radius: 6px;
    background: #abb0b3;
}

/* status bar */
.status {
    display: grid;
    grid-template-columns: 42px 19px 1082px 48px 52px 31px 30px 13px 54px 48px 41px 30px 55px 36px 40px 179px 47px 24px;
    align-items: center;
    height: 35px;
    padding: 0 0 2px 24px;
}

.status > * {
    margin-left: 1px;
}

.zoom {
    letter-spacing: 0.1px;
}

.view-on {
    display: flex;
    align-items: center;
    justify-content: center;
    width: 36px;
    height: 34px;
    border-radius: 6px;
    background: #ccd1d5;
}

.slider {
    display: flex;
    align-items: center;
    width: 159px;
}

.slider .fill {
    width: 47px;
    height: 2px;
    background: #1763c2;
}

.slider .knob {
    width: 19px;
    height: 19px;
    border: 5px solid #fff;
    border-radius: 50%;
    background: #8f9296;
    box-shadow: 0 0 2px #888;
}

.slider .rest {
    flex: 1;
    height: 2px;
    background: #adb2b5;
}

.taskbar {
    height: 6px;
    border-top: 2px solid #35424f;
    background: #12263a;
}

/* watermark */
.watermark {
    position: absolute;
    left: 840px;
    top: 869px;
    width: 232px;
    height: 130px;
    color: rgba(168, 168, 168, 0.3);
    letter-spacing: 0;
}

.watermark span {
    position: absolute;
    left: 0;
    transform-origin: 0 0;
}

.watermark .ar {
    top: 0;
    font: bold 66px/80px "DejaVu Sans", sans-serif;
    transform: scale(0.97, 1.2);
}

.watermark .en {
    top: 83px;
    font: bold 38px/44px "Liberation Sans", sans-serif;
    transform: scaleX(0.985);
}
```
